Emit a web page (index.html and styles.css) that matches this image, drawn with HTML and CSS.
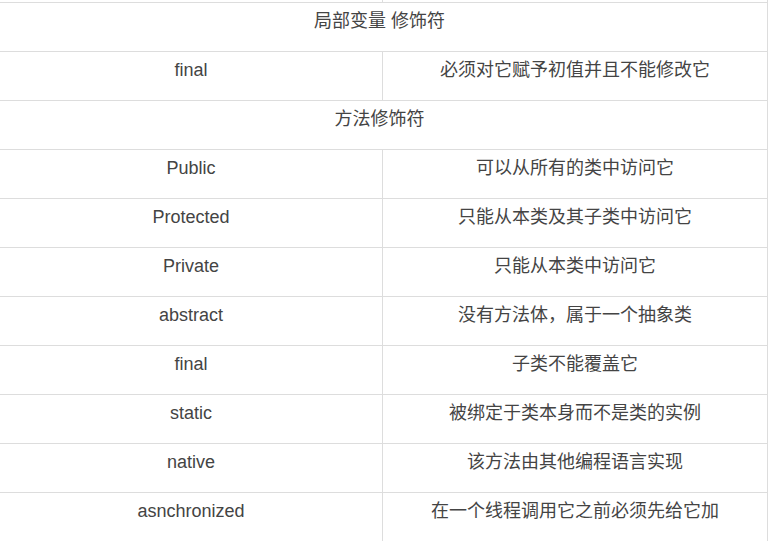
FILE: index.html
```html
<!DOCTYPE html>
<html lang="zh">
<head>
<meta charset="utf-8">
<title>修饰符</title>
<link rel="stylesheet" href="styles.css">
</head>
<body>
<div class="table">
  <div class="row spacer"><div class="cell"></div><div class="cell"></div></div>
  <div class="row"><div class="cell span">局部变量 修饰符</div></div>
  <div class="row"><div class="cell">final</div><div class="cell">必须对它赋予初值并且不能修改它</div></div>
  <div class="row"><div class="cell span">方法修饰符</div></div>
  <div class="row"><div class="cell">Public</div><div class="cell">可以从所有的类中访问它</div></div>
  <div class="row"><div class="cell">Protected</div><div class="cell">只能从本类及其子类中访问它</div></div>
  <div class="row"><div class="cell">Private</div><div class="cell">只能从本类中访问它</div></div>
  <div class="row"><div class="cell">abstract</div><div class="cell">没有方法体，属于一个抽象类</div></div>
  <div class="row"><div class="cell">final</div><div class="cell">子类不能覆盖它</div></div>
  <div class="row"><div class="cell">static</div><div class="cell">被绑定于类本身而不是类的实例</div></div>
  <div class="row"><div class="cell">native</div><div class="cell">该方法由其他编程语言实现</div></div>
  <div class="row"><div class="cell">asnchronized</div><div class="cell">在一个线程调用它之前必须先给它加</div></div>
</div>
</body>
</html>
```
FILE: styles.css
```css
html, body {
  margin: 0;
  padding: 0;
  background: #fff;
}
.table {
  width: 768px;
  font-family: "Liberation Sans", "Noto Sans CJK SC", sans-serif;
  font-size: 18px;
  color: #444;
}
.row {
  display: grid;
  grid-template-columns: 383px 385px;
  border-bottom: 1px solid #ddd;
}
.cell {
  box-sizing: border-box;
  height: 48px;
  padding-top: 8px;
  line-height: 21px;
  text-align: center;
  border-right: 1px solid #ddd;
  white-space: nowrap;
}
.cell.span {
  grid-column: 1 / 3;
  padding-right: 8px;
}
.spacer .cell {
  height: 2px;
  padding: 0;
}
```
